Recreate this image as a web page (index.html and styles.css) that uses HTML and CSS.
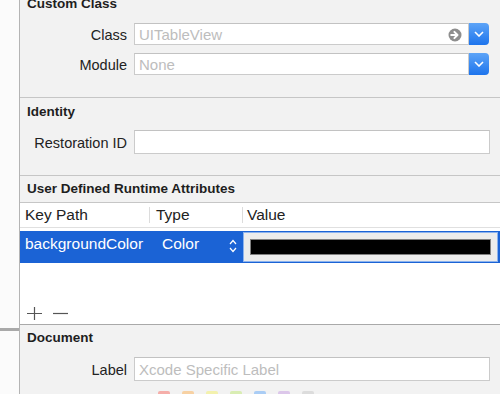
FILE: index.html
```html
<!DOCTYPE html>
<html lang="en">
<head>
    <meta charset="UTF-8">
    <meta name="viewport" content="width=device-width, initial-scale=1.0">
    <title>Identity Inspector</title>
    <link rel="stylesheet" href="styles.css">
</head>
<body>
<div class="app">
    <div class="gutter"><div class="gutter-mark"></div></div>
    <main class="inspector">
        <section class="group custom-class">
            <h2>Custom Class</h2>
            <div class="row">
                <span class="label">Class</span>
                <div class="combo">
                    <div class="field short placeholder">
                        <span>UITableView</span>
                        <svg class="goto" width="14" height="14" viewBox="0 0 14 14"><circle cx="7" cy="7" r="6.5" fill="#8e8e8e"/><path d="M3.2 7h5.6M6.4 3.9L9.5 7 6.4 10.1" stroke="#fff" stroke-width="2" fill="none" stroke-linecap="round" stroke-linejoin="round"/></svg>
                    </div>
                    <div class="pop"><svg width="10" height="6" viewBox="0 0 10 6"><path d="M1 1l4 4 4-4" stroke="#fff" stroke-width="1.6" fill="none"/></svg></div>
                </div>
            </div>
            <div class="row">
                <span class="label">Module</span>
                <div class="combo">
                    <div class="field short placeholder"><span>None</span></div>
                    <div class="pop"><svg width="10" height="6" viewBox="0 0 10 6"><path d="M1 1l4 4 4-4" stroke="#fff" stroke-width="1.6" fill="none"/></svg></div>
                </div>
            </div>
        </section>

        <section class="group identity">
            <h2>Identity</h2>
            <div class="row">
                <span class="label">Restoration ID</span>
                <div class="field"></div>
            </div>
        </section>

        <section class="group attributes">
            <h2>User Defined Runtime Attributes</h2>
            <div class="table">
                <div class="thead">
                    <div class="col key">Key Path</div>
                    <div class="col type">Type</div>
                    <div class="col value">Value</div>
                </div>
                <div class="trow selected">
                    <div class="col key">backgroundColor</div>
                    <div class="col type">
                        <span>Color</span>
                        <svg width="8" height="14" viewBox="0 0 8 14"><path d="M1 5l3-3.5L7 5M1 9l3 3.5L7 9" stroke="#fff" stroke-width="1.2" fill="none"/></svg>
                    </div>
                    <div class="col value">
                        <div class="well"><div class="swatch"></div></div>
                    </div>
                </div>
                <div class="tfoot">
                    <svg width="15" height="13" viewBox="0 0 15 13"><path d="M7.5 0v13M0 6.5h15" stroke="#555" stroke-width="1.2"/></svg>
                    <svg width="15" height="13" viewBox="0 0 15 13"><path d="M0 6.5h15" stroke="#555" stroke-width="1.2"/></svg>
                </div>
            </div>
        </section>

        <section class="group document">
            <h2>Document</h2>
            <div class="row">
                <span class="label">Label</span>
                <div class="field placeholder"><span>Xcode Specific Label</span></div>
            </div>
            <div class="swatches">
                <span class="chip red"></span>
                <span class="chip orange"></span>
                <span class="chip yellow"></span>
                <span class="chip green"></span>
                <span class="chip blue"></span>
                <span class="chip purple"></span>
                <span class="chip gray"></span>
            </div>
        </section>
    </main>
</div>
</body>
</html>
```

FILE: styles.css
```css
body {
    margin: 0;
    width: 500px;
    height: 394px;
    overflow: hidden;
    font-family: "Liberation Sans", Arial, sans-serif;
    color: #222;
    background: #f2f2f2;
}
.app {
    display: flex;
    height: 394px;
}
.gutter {
    width: 19px;
    flex-shrink: 0;
    background: #fbfbfb;
    border-right: 1px solid #b4b4b4;
    padding-top: 328px;
}
.gutter-mark {
    height: 3px;
    background: #a9a9a9;
}
.inspector {
    flex: 1;
    display: flex;
    flex-direction: column;
    background: #f2f2f2;
}
.group {
    border-bottom: 1px solid #c6c6c6;
}
h2 {
    margin: 0;
    padding-left: 7px;
    font-size: 13.5px;
    font-weight: bold;
    line-height: 16px;
    color: #1e1e1e;
}
.row {
    display: flex;
    align-items: center;
    gap: 7px;
    padding-right: 10px;
}
.label {
    width: 107px;
    text-align: right;
    font-size: 14.5px;
    padding-top: 1px;
}
.field {
    flex: 1;
    height: 24px;
    box-sizing: border-box;
    background: #fff;
    border: 1px solid #cbcbcb;
    border-top-color: #c2c2c2;
    display: flex;
    align-items: center;
    padding: 1px 4px 0;
    font-size: 15px;
}
.field.short {
    height: 22px;
}
.placeholder {
    color: #bdbdbd;
}
.placeholder span {
    flex: 1;
}
.goto {
    margin-right: 2px;
}
.combo {
    flex: 1;
    display: flex;
    padding-right: 1px;
}
.pop {
    width: 20px;
    height: 22px;
    border-radius: 0 4px 4px 0;
    background: linear-gradient(#5da4f7, #1d74ec);
    display: flex;
    align-items: center;
    justify-content: center;
}

.custom-class {
    margin-top: -4px;
    padding-bottom: 22px;
}
.custom-class .row {
    margin-top: 8px;
}
.custom-class .row:first-of-type {
    margin-top: 11px;
}
.identity {
    padding-top: 6px;
    padding-bottom: 21px;
}
.identity .row {
    margin-top: 10px;
}

.attributes {
    padding-top: 5px;
    border-bottom-color: #a9a9a9;
}
.table {
    margin-top: 5px;
    height: 121px;
    border-top: 1px solid #c6c6c6;
    background: #fff;
    display: flex;
    flex-direction: column;
}
.thead {
    height: 24px;
    display: flex;
    align-items: center;
    border-bottom: 1px solid #e0e0e0;
    font-size: 15.5px;
}
.col.key {
    width: 124px;
    padding-left: 5px;
}
.col.type {
    width: 86px;
    padding-left: 6px;
}
.col.value {
    flex: 1;
    padding-left: 4px;
}
.thead .col {
    line-height: 16px;
}
.thead .type,
.thead .value {
    border-left: 1px solid #dcdcdc;
}
.trow {
    margin-top: 3px;
    height: 32px;
    display: flex;
    align-items: center;
    font-size: 15.5px;
}
.selected {
    background: #1b63d5;
    color: #fff;
}
.selected .col {
    padding-bottom: 7px;
}
.selected .type {
    display: flex;
    align-items: center;
    padding-left: 13px;
    padding-right: 5px;
    width: 75px;
}
.selected .type span {
    flex: 1;
}
.selected .type svg {
    margin-top: 5px;
}
.selected .value {
    padding: 0 2px 0 1px;
    align-self: stretch;
    display: flex;
}
.well {
    flex: 1;
    margin: 1px 0;
    background: #ececec;
    border: 1px solid #8cb3ee;
    display: flex;
    align-items: center;
    padding: 0 6px;
}
.swatch {
    flex: 1;
    height: 14px;
    background: #000;
    border: 1px solid #808080;
}
.tfoot {
    margin-top: auto;
    display: flex;
    gap: 11px;
    padding: 0 0 4px 7px;
}

.document {
    padding-top: 5px;
    border-bottom: none;
    flex: 1;
}
.document .row {
    margin-top: 11px;
}
.swatches {
    margin-top: 10px;
    padding-left: 138px;
    display: flex;
    gap: 12px;
}
.chip {
    width: 12px;
    height: 12px;
    border-radius: 2px;
}
.red { background: #f5aea9; }
.orange { background: #f7d1a3; }
.yellow { background: #f3f1ad; }
.green { background: #d9edb3; }
.blue { background: #aacdf5; }
.purple { background: #dcc7ea; }
.gray { background: #dcdcdc; }
```
